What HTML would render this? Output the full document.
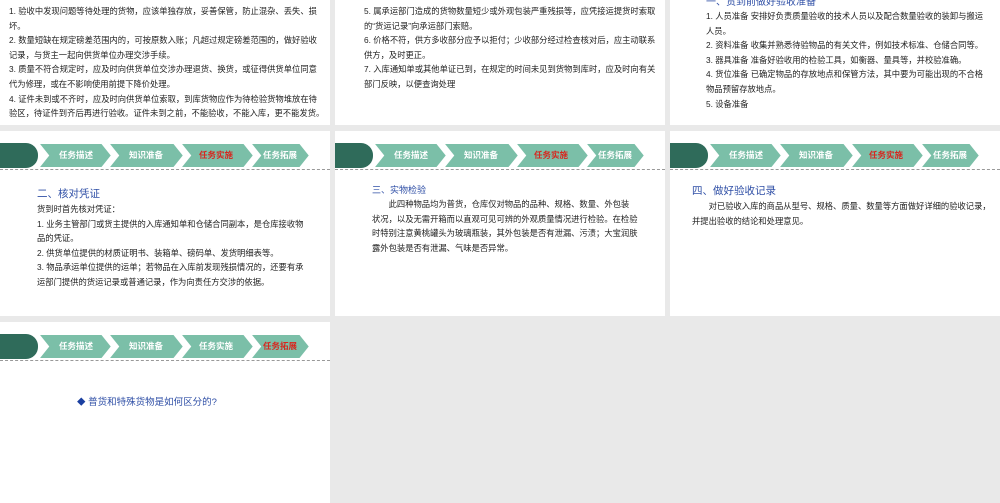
<!DOCTYPE html>
<html><head><meta charset="utf-8"><style>
body{margin:0;width:1000px;height:503px;background:#e9e9e9;position:relative;overflow:hidden;font-family:"Liberation Sans","Noto Sans CJK SC",sans-serif;}
.s{position:absolute;background:#fff;overflow:hidden;}
.t{position:absolute;font-size:8.3px;line-height:14.6px;color:#222;white-space:nowrap;}
.h{position:absolute;color:#2f4fa6;white-space:nowrap;}
.nav{position:absolute;left:0;top:12px;width:330px;height:27px;}
.dash{position:absolute;left:0;top:38px;width:330px;border-top:1px dashed #999;}
.nl{position:absolute;top:12px;font-size:8.5px;font-weight:bold;color:#fff;line-height:25px;}
.nl.r{color:#d7261e;}
</style></head><body>

<!-- Row 1 -->
<div class="s" style="left:0;top:0;width:330px;height:125px">
<div class="t" style="left:9px;top:4px">1. 验收中发现问题等待处理的货物，应该单独存放，妥善保管，防止混杂、丢失、损<br>坏。<br>2. 数量短缺在规定磅差范围内的，可按原数入账；凡超过规定磅差范围的，做好验收<br>记录，与货主一起向供货单位办理交涉手续。<br>3. 质量不符合规定时，应及时向供货单位交涉办理退货、换货，或征得供货单位同意<br>代为修理，或在不影响使用前提下降价处理。<br>4. 证件未到或不齐时，应及时向供货单位索取，到库货物应作为待检验货物堆放在待<br>验区，待证件到齐后再进行验收。证件未到之前，不能验收，不能入库，更不能发货。</div>
</div>
<div class="s" style="left:335px;top:0;width:330px;height:125px">
<div class="t" style="left:29px;top:4px">5. 属承运部门造成的货物数量短少或外观包装严重残损等，应凭接运提货时索取<br>的“货运记录”向承运部门索赔。<br>6. 价格不符，供方多收部分应予以拒付；少收部分经过检查核对后，应主动联系<br>供方，及时更正。<br>7. 入库通知单或其他单证已到，在规定的时间未见到货物到库时，应及时向有关<br>部门反映，以便查询处理</div>
</div>
<div class="s" style="left:670px;top:0;width:330px;height:125px">
<div class="h" style="left:36px;top:-7px;font-size:10px">一、货到前做好验收准备</div>
<div class="t" style="left:36px;top:9px">1. 人员准备 安排好负责质量验收的技术人员以及配合数量验收的装卸与搬运<br>人员。<br>2. 资料准备 收集并熟悉待验物品的有关文件，例如技术标准、仓储合同等。<br>3. 器具准备 准备好验收用的检验工具，如衡器、量具等，并校验准确。<br>4. 货位准备 已确定物品的存放地点和保管方法，其中要为可能出现的不合格<br>物品预留存放地点。<br>5. 设备准备</div>
</div>

<!-- Row 2 -->
<div class="s" style="left:0;top:131px;width:330px;height:185px">
<svg class="nav" viewBox="0 0 330 27"><path d="M0 0H26A12 12 0 0 1 38 12.5 12 12 0 0 1 26 25H0Z" fill="#2f6b5a"/><g fill="#7bbfa8" stroke="#fff" stroke-width="2"><polygon points="38,0 102,0 112,12.5 102,25 38,25 48,12.5"/><polygon points="108,0 174,0 184,12.5 174,25 108,25 118,12.5"/><polygon points="180,0 244,0 254,12.5 244,25 180,25 190,12.5"/><polygon points="250,0 300,0 310,12.5 300,25 250,25 260,12.5"/></g></svg>
<div class="nl" style="left:59px">任务描述</div><div class="nl" style="left:129px">知识准备</div><div class="nl r" style="left:199px">任务实施</div><div class="nl" style="left:263px">任务拓展</div>
<div class="dash"></div>
<div class="h" style="left:37px;top:55px;font-size:10.5px">二、核对凭证</div>
<div class="t" style="left:37px;top:71px">货到时首先核对凭证：<br>1. 业务主管部门或货主提供的入库通知单和仓储合同副本，是仓库接收物<br>品的凭证。<br>2. 供货单位提供的材质证明书、装箱单、磅码单、发货明细表等。<br>3. 物品承运单位提供的运单；若物品在入库前发现残损情况的，还要有承<br>运部门提供的货运记录或普通记录，作为向责任方交涉的依据。</div>
</div>
<div class="s" style="left:335px;top:131px;width:330px;height:185px">
<svg class="nav" viewBox="0 0 330 27"><path d="M0 0H26A12 12 0 0 1 38 12.5 12 12 0 0 1 26 25H0Z" fill="#2f6b5a"/><g fill="#7bbfa8" stroke="#fff" stroke-width="2"><polygon points="38,0 102,0 112,12.5 102,25 38,25 48,12.5"/><polygon points="108,0 174,0 184,12.5 174,25 108,25 118,12.5"/><polygon points="180,0 244,0 254,12.5 244,25 180,25 190,12.5"/><polygon points="250,0 300,0 310,12.5 300,25 250,25 260,12.5"/></g></svg>
<div class="nl" style="left:59px">任务描述</div><div class="nl" style="left:129px">知识准备</div><div class="nl r" style="left:199px">任务实施</div><div class="nl" style="left:263px">任务拓展</div>
<div class="dash"></div>
<div class="h" style="left:37px;top:52px;font-size:9px">三、实物检验</div>
<div class="t" style="left:37px;top:66px">　　此四种物品均为普货，仓库仅对物品的品种、规格、数量、外包装<br>状况，以及无需开箱而以直观可见可辨的外观质量情况进行检验。在检验<br>时特别注意黄桃罐头为玻璃瓶装，其外包装是否有泄漏、污渍；大宝润肤<br>露外包装是否有泄漏、气味是否异常。</div>
</div>
<div class="s" style="left:670px;top:131px;width:330px;height:185px">
<svg class="nav" viewBox="0 0 330 27"><path d="M0 0H26A12 12 0 0 1 38 12.5 12 12 0 0 1 26 25H0Z" fill="#2f6b5a"/><g fill="#7bbfa8" stroke="#fff" stroke-width="2"><polygon points="38,0 102,0 112,12.5 102,25 38,25 48,12.5"/><polygon points="108,0 174,0 184,12.5 174,25 108,25 118,12.5"/><polygon points="180,0 244,0 254,12.5 244,25 180,25 190,12.5"/><polygon points="250,0 300,0 310,12.5 300,25 250,25 260,12.5"/></g></svg>
<div class="nl" style="left:59px">任务描述</div><div class="nl" style="left:129px">知识准备</div><div class="nl r" style="left:199px">任务实施</div><div class="nl" style="left:263px">任务拓展</div>
<div class="dash"></div>
<div class="h" style="left:22px;top:52px;font-size:10.5px">四、做好验收记录</div>
<div class="t" style="left:22px;top:68px">　　对已验收入库的商品从型号、规格、质量、数量等方面做好详细的验收记录，<br>并提出验收的结论和处理意见。</div>
</div>

<!-- Row 3 -->
<div class="s" style="left:0;top:322px;width:330px;height:181px">
<svg class="nav" viewBox="0 0 330 27"><path d="M0 0H26A12 12 0 0 1 38 12.5 12 12 0 0 1 26 25H0Z" fill="#2f6b5a"/><g fill="#7bbfa8" stroke="#fff" stroke-width="2"><polygon points="38,0 102,0 112,12.5 102,25 38,25 48,12.5"/><polygon points="108,0 174,0 184,12.5 174,25 108,25 118,12.5"/><polygon points="180,0 244,0 254,12.5 244,25 180,25 190,12.5"/><polygon points="250,0 300,0 310,12.5 300,25 250,25 260,12.5"/></g></svg>
<div class="nl" style="left:59px">任务描述</div><div class="nl" style="left:129px">知识准备</div><div class="nl" style="left:199px">任务实施</div><div class="nl r" style="left:263px">任务拓展</div>
<div class="dash"></div>
<div class="h" style="left:77px;top:72px;font-size:9.5px"><span style="color:#1a3fa0;font-size:8.5px">◆</span> 普货和特殊货物是如何区分的?</div>
</div>
</body></html>
